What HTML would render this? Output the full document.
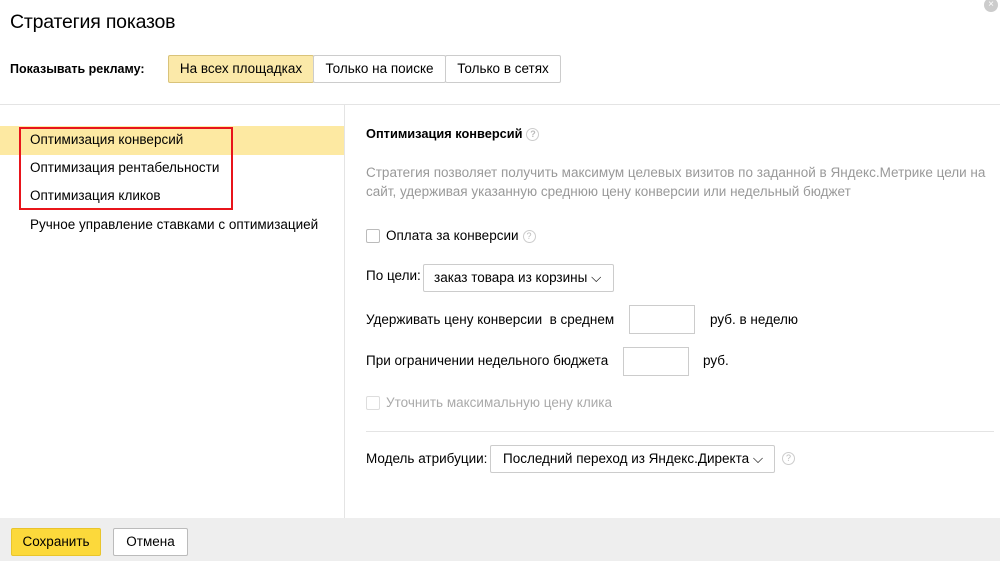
<!DOCTYPE html>
<html><head><meta charset="utf-8"><style>
*{margin:0;padding:0;box-sizing:border-box}
body{width:1000px;height:561px;background:#fff;font-family:"Liberation Sans",sans-serif;color:#000;position:relative;overflow:hidden;font-size:13.5px}
.a{position:absolute;white-space:nowrap}
.c{letter-spacing:0}
.btn{position:absolute;border:1px solid #ccc;border-radius:2px;background:#fff;height:28px;line-height:26px}
.q{display:inline-block;width:13px;height:13px;border:1px solid #ccc;border-radius:50%;color:#bbb;font-size:9px;text-align:center;line-height:11px;vertical-align:1px;margin-left:4px}
.cb{position:absolute;width:14px;height:14px;border:1px solid #bbb;border-radius:2px;background:#fff}
.inp{position:absolute;border:1px solid #ccc;background:#fff}
</style></head><body>
<div class="a" style="left:10px;top:11px;font-size:19.5px;letter-spacing:-0.2px">Стратегия показов</div>
<div class="a" style="right:2px;top:-2px;width:14px;height:14px;border-radius:50%;background:#ccc;color:#fff;font-size:10px;text-align:center;line-height:14px">×</div>
<div class="a c" style="left:10px;top:62px;font-weight:bold;font-size:12.5px">Показывать рекламу:</div>
<div class="btn c" style="left:168px;top:55px;width:146px;background:#fbe9a9;border-color:#d9c37a;text-align:center">На всех площадках</div>
<div class="btn c" style="left:313px;top:55px;width:133px;text-align:center">Только на поиске</div>
<div class="btn c" style="left:445px;top:55px;width:116px;text-align:center">Только в сетях</div>
<div class="a" style="left:0;top:104px;width:1000px;height:1px;background:#e4e4e4"></div>
<div class="a" style="left:344px;top:104px;width:1px;height:414px;background:#e4e4e4"></div>
<div class="a" style="left:0;top:126px;width:344px;height:29px;background:#fde9a2"></div>
<div class="a c" style="left:30px;top:132px">Оптимизация конверсий</div>
<div class="a c" style="left:30px;top:160px">Оптимизация рентабельности</div>
<div class="a c" style="left:30px;top:188px">Оптимизация кликов</div>
<div class="a c" style="left:30px;top:217px">Ручное управление ставками с оптимизацией</div>
<div class="a" style="left:19px;top:127px;width:214px;height:83px;border:2px solid #e8141b"></div>
<div class="a c" style="left:366px;top:126px;font-weight:bold;font-size:12.8px">Оптимизация конверсий<span class="q">?</span></div>
<div class="a c" style="left:366px;top:163px;color:#999;line-height:19px">Стратегия позволяет получить максимум целевых визитов по заданной в Яндекс.Метрике цели на<br>сайт, удерживая указанную среднюю цену конверсии или недельный бюджет</div>
<div class="cb" style="left:366px;top:229px"></div>
<div class="a c" style="left:386px;top:228px">Оплата за конверсии<span class="q">?</span></div>
<div class="a c" style="left:366px;top:268px">По цели:</div>
<div class="btn c" style="left:423px;top:264px;padding-left:10px;width:191px">заказ товара из корзины ⌵</div>
<div class="a c" style="left:366px;top:312px">Удерживать цену конверсии &nbsp;в среднем</div>
<div class="inp" style="left:629px;top:305px;width:66px;height:29px"></div>
<div class="a c" style="left:710px;top:312px">руб. в неделю</div>
<div class="a c" style="left:366px;top:353px">При ограничении недельного бюджета</div>
<div class="inp" style="left:623px;top:347px;width:66px;height:29px"></div>
<div class="a c" style="left:703px;top:353px">руб.</div>
<div class="cb" style="left:366px;top:396px;border-color:#ddd"></div>
<div class="a c" style="left:386px;top:395px;color:#aaa">Уточнить максимальную цену клика</div>
<div class="a" style="left:366px;top:431px;width:628px;height:1px;background:#e4e4e4"></div>
<div class="a c" style="left:366px;top:451px">Модель атрибуции:</div>
<div class="btn c" style="left:490px;top:445px;width:285px;padding-left:12px;height:28px">Последний переход из Яндекс.Директа ⌵</div>
<div class="a" style="left:778px;top:450px"><span class="q">?</span></div>
<div class="a" style="left:0;top:518px;width:1000px;height:43px;background:#eee"></div>
<div class="btn c" style="left:11px;top:528px;width:90px;background:#fcd93b;border-color:#e9c52c;text-align:center">Сохранить</div>
<div class="btn c" style="left:113px;top:528px;width:75px;text-align:center;border-color:#bbb">Отмена</div>
</body></html>
